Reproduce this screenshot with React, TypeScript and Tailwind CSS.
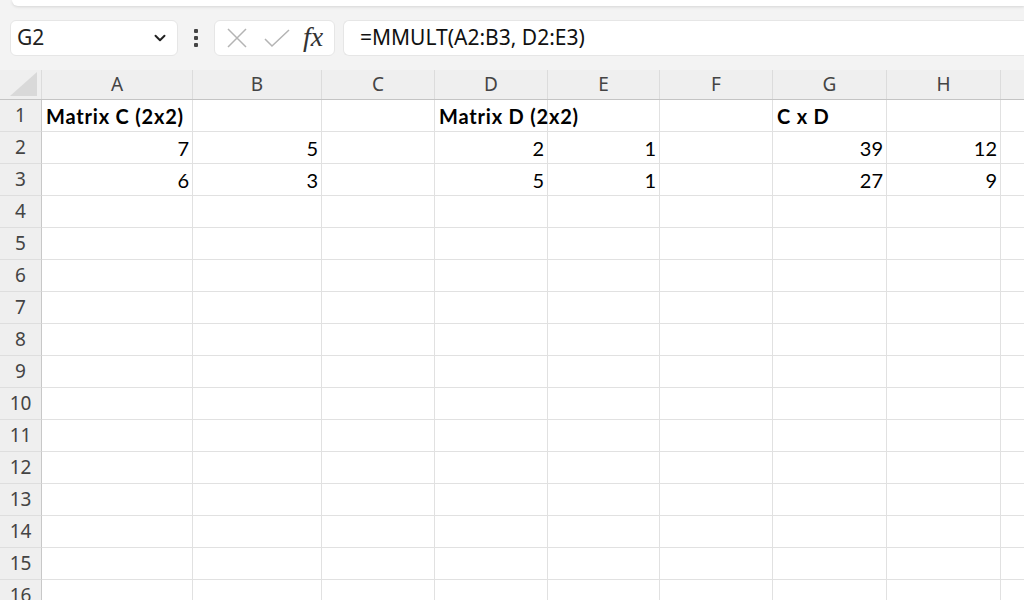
import { ChevronDown } from 'lucide-react';

const cols = ['A', 'B', 'C', 'D', 'E', 'F', 'G', 'H', ''];
const rowCount = 16;

type Cell = { text: string; bold?: boolean; right?: boolean };

const data: Record<string, Cell> = {
  'A1': { text: 'Matrix C (2x2)', bold: true },
  'D1': { text: 'Matrix D (2x2)', bold: true },
  'G1': { text: 'C x D', bold: true },
  'A2': { text: '7', right: true },
  'B2': { text: '5', right: true },
  'D2': { text: '2', right: true },
  'E2': { text: '1', right: true },
  'G2': { text: '39', right: true },
  'H2': { text: '12', right: true },
  'A3': { text: '6', right: true },
  'B3': { text: '3', right: true },
  'D3': { text: '5', right: true },
  'E3': { text: '1', right: true },
  'G3': { text: '27', right: true },
  'H3': { text: '9', right: true },
};

const gridCols = 'grid grid-cols-[42px_151px_129px_113px_113px_112px_113px_114px_114px_60px]';
const uiFont = "font-['Noto_Sans',_'Open_Sans',_sans-serif]";
const cellFont = "font-['Lato',_'Liberation_Sans',_sans-serif]";

const App = () => {
  return (
    <div className="w-[1024px] h-[600px] overflow-hidden bg-[#f3f3f3]">
      {/* Ribbon edge */}
      <div className="ml-[12px] h-[6px] bg-white rounded-bl-[8px] shadow-[0_1px_3px_rgba(0,0,0,0.12)]" />

      {/* Formula bar */}
      <div className="flex items-center mt-[14px] h-[36px]">
        <div className="ml-[10px] w-[168px] h-[36px] bg-white rounded-[6px] border border-[#e6e6e6] flex items-center justify-between pl-[6px] pr-[8px]">
          <span className={`${uiFont} text-[21px] text-[#222]`}>G2</span>
          <ChevronDown className="w-[18px] h-[18px] text-[#222]" strokeWidth={2.6} />
        </div>
        <div className="w-[36px] flex flex-col items-center gap-[3px]">
          <div className="w-[4px] h-[4px] bg-[#444] rounded-[1px]" />
          <div className="w-[4px] h-[4px] bg-[#444] rounded-[1px]" />
          <div className="w-[4px] h-[4px] bg-[#444] rounded-[1px]" />
        </div>
        <div className="w-[121px] h-[36px] bg-white rounded-[6px] border border-[#e6e6e6] flex items-center pl-[10px]">
          <svg width="22" height="22" viewBox="0 0 22 22" className="ml-[1px]">
            <path d="M2 2 L20 20 M20 2 L2 20" stroke="#b4b4b4" strokeWidth="1.5" fill="none" />
          </svg>
          <svg width="28" height="22" viewBox="0 0 28 22" className="ml-[15px]">
            <path d="M2 12 L9 19 L26 3" stroke="#b4b4b4" strokeWidth="1.5" fill="none" />
          </svg>
          <span className="ml-[12px] font-['Liberation_Serif',_serif] italic text-[28px] leading-none text-[#333] pb-[2px]">fx</span>
        </div>
        <div className="ml-[8px] flex-1 h-[36px] bg-white rounded-l-[6px] border border-r-0 border-[#e6e6e6] flex items-center pl-[16px]">
          <span className={`${uiFont} text-[21px] text-[#111]`}>=MMULT(A2:B3, D2:E3)</span>
        </div>
      </div>

      {/* Sheet */}
      <div className="mt-[14px] bg-white">
        {/* Column headers */}
        <div className={`${gridCols} h-[30px] bg-[#efefef] border-b border-[#c4c4c4]`}>
          <div className="relative border-r border-[#dcdcdc]">
            <svg width="28" height="24" viewBox="0 0 28 24" className="absolute right-[3px] bottom-[3px]">
              <polygon points="27,0 27,24 0,24" fill="#d9d9d9" />
            </svg>
          </div>
          {cols.map((c, i) => (
            <div
              key={i}
              className={`${uiFont} flex items-center justify-center text-[19px] text-[#444] border-r border-[#dcdcdc]`}
            >
              {c}
            </div>
          ))}
        </div>

        {/* Rows */}
        {Array.from({ length: rowCount }, (_, r) => r + 1).map((row) => (
          <div key={row} className={`${gridCols} h-[32px]`}>
            <div
              className={`${uiFont} flex items-center justify-center bg-[#efefef] text-[19px] text-[#444] border-r border-[#c8c8c8] border-b border-b-[#dedede]`}
            >
              {row}
            </div>
            {cols.map((c, i) => {
              const cell = data[`${c}${row}`];
              return (
                <div
                  key={i}
                  className={`${cellFont} flex items-center whitespace-nowrap px-[4px] pr-[3px] text-[20px] text-black border-r border-b border-[#e1e1e1] ${
                    cell?.right ? 'justify-end' : 'justify-start'
                  } ${cell?.bold ? 'font-bold tracking-[0.8px]' : ''}`}
                >
                  {cell?.text}
                </div>
              );
            })}
          </div>
        ))}
      </div>
    </div>
  );
};

export default App;
